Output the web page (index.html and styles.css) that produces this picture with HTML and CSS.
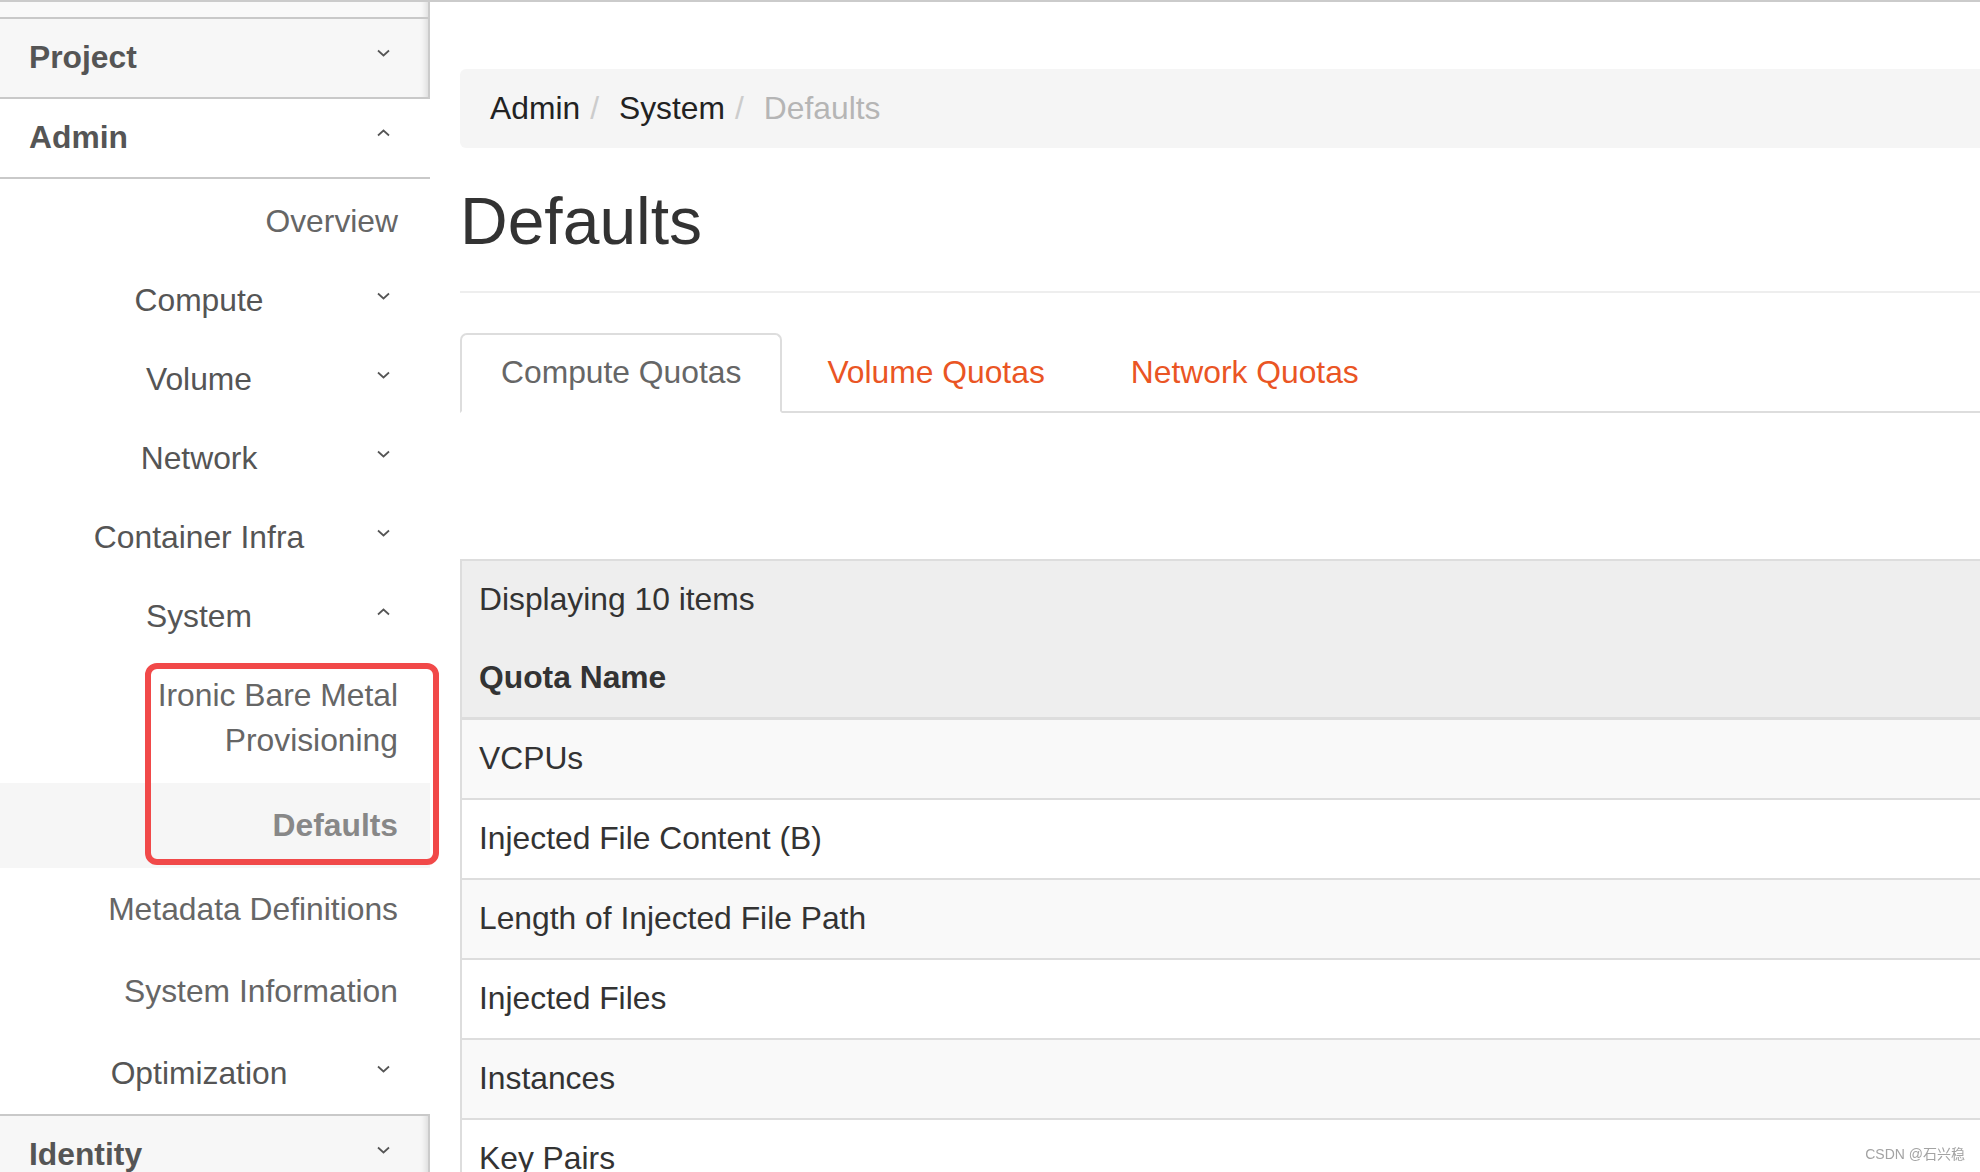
FILE: index.html
```html
<!DOCTYPE html>
<html lang="en">
<head>
	<meta charset="UTF-8">
	<title>Defaults - OpenStack Dashboard</title>
	<link rel="stylesheet" href="styles.css">
</head>
<body>
	<div class="page">
		<nav class="sidebar">
			<div class="panel_cut"></div>
			<div class="panel_head collapsed">
				<span>Project</span>
				<svg class="chev" viewBox="0 0 13 8"><path d="M1 1.5 6.5 6.5 12 1.5"/></svg>
			</div>
			<div class="panel_head">
				<span>Admin</span>
				<svg class="chev" viewBox="0 0 13 8"><path d="M1 6.5 6.5 1.5 12 6.5"/></svg>
			</div>
			<ul class="menu">
				<li class="item link">Overview</li>
				<li class="item group"><span>Compute</span><svg class="chev" viewBox="0 0 13 8"><path d="M1 1.5 6.5 6.5 12 1.5"/></svg></li>
				<li class="item group"><span>Volume</span><svg class="chev" viewBox="0 0 13 8"><path d="M1 1.5 6.5 6.5 12 1.5"/></svg></li>
				<li class="item group"><span>Network</span><svg class="chev" viewBox="0 0 13 8"><path d="M1 1.5 6.5 6.5 12 1.5"/></svg></li>
				<li class="item group"><span>Container Infra</span><svg class="chev" viewBox="0 0 13 8"><path d="M1 1.5 6.5 6.5 12 1.5"/></svg></li>
				<li class="item group"><span>System</span><svg class="chev" viewBox="0 0 13 8"><path d="M1 6.5 6.5 1.5 12 6.5"/></svg></li>
				<li class="item link sub">Ironic Bare Metal Provisioning</li>
				<li class="item link sub active">Defaults</li>
				<li class="item link after">Metadata Definitions</li>
				<li class="item link after">System Information</li>
				<li class="item group after"><span>Optimization</span><svg class="chev" viewBox="0 0 13 8"><path d="M1 1.5 6.5 6.5 12 1.5"/></svg></li>
			</ul>
			<div class="panel_head collapsed last">
				<span>Identity</span>
				<svg class="chev" viewBox="0 0 13 8"><path d="M1 1.5 6.5 6.5 12 1.5"/></svg>
			</div>
		</nav>

		<main class="content">
			<ol class="breadcrumb">
				<li>Admin</li>
				<li>System</li>
				<li class="current">Defaults</li>
			</ol>
			<h1 class="page_title">Defaults</h1>

			<ul class="tabs">
				<li class="active"><a>Compute Quotas</a></li>
				<li><a>Volume Quotas</a></li>
				<li><a>Network Quotas</a></li>
			</ul>

			<table class="quota_table">
				<thead>
					<tr><th class="caption">Displaying 10 items</th></tr>
					<tr><th class="col_name">Quota Name</th></tr>
				</thead>
				<tbody>
					<tr><td>VCPUs</td></tr>
					<tr><td>Injected File Content (B)</td></tr>
					<tr><td>Length of Injected File Path</td></tr>
					<tr><td>Injected Files</td></tr>
					<tr><td>Instances</td></tr>
					<tr><td>Key Pairs</td></tr>
					<tr><td>Metadata Items</td></tr>
					<tr><td>RAM (MB)</td></tr>
					<tr><td>Server Groups</td></tr>
					<tr><td>Server Group Members</td></tr>
				</tbody>
			</table>
		</main>

		<!-- 截图上的红框标注 -->
		<div class="mark"></div>
	</div>
	<div class="watermark">CSDN @石兴稳</div>
</body>
</html>
```

FILE: styles.css
```css
html,body{margin: 0;padding: 0;overflow: hidden;}
body{font-family: "Liberation Sans", Arial, sans-serif;font-size: 31.8px;color: #333;background: #fff;}
ul,ol,li,h1{margin: 0;padding: 0;}
li{list-style: none;}

.page{display: flex;align-items: flex-start;width: 2300px;border-top: 2px solid #cbcbcb;position: relative;}

/* sidebar */
.sidebar{width: 430px;flex: none;}
.panel_cut{height: 15px;background: #f9f9f9;border-right: 2px solid #cbcbcb;border-bottom: 2px solid #c9c9c9;box-shadow: inset -8px 0 6px -6px rgba(0,0,0,0.12);}
.panel_head{display: flex;justify-content: space-between;padding: 16px 40px 17px 29px;line-height: 45px;font-weight: bold;color: #555;border-bottom: 2px solid #c9c9c9;}
.panel_head.collapsed{background: #f7f7f7;border-right: 2px solid #cbcbcb;padding-right: 38px;box-shadow: inset -8px 0 6px -6px rgba(0,0,0,0.12);}
.panel_head.last{border-top: 2px solid #c9c9c9;border-bottom: 0;}
.chev{width: 13px;height: 8px;margin-top: 14px;flex: none;}
.chev path{fill: none;stroke: #555;stroke-width: 1.7;}

.menu{padding: 3px 0 0;}
.item{padding: 17px 32px 17px 0;line-height: 45px;color: #555;}
.item.link{text-align: right;color: #666;}
.item.group{display: grid;}
.item.group span,.item.group .chev{grid-area: 1 / 1;}
.item.group span{justify-self: center;}
.item.group .chev{justify-self: end;margin-right: 8px;}
.item.sub{padding-left: 150px;}
.item.active{margin-top: 3px;padding-top: 20px;padding-bottom: 20px;background: #f6f6f6;color: #888;font-weight: bold;}
.item.after{padding-top: 19px;padding-bottom: 18px;}

/* main */
.content{flex: 1;padding: 67px 0 0 30px;}
.breadcrumb{display: flex;height: 79px;line-height: 79px;padding: 0 30px;background: #f5f5f5;border-radius: 6px;color: #222;}
.breadcrumb li + li:before{content: "/";color: #ccc;padding: 0 20px 0 10px;}
.breadcrumb .current{color: #b5b5b5;}

.page_title{margin-top: 38px;padding-bottom: 34px;border-bottom: 2px solid #eee;font-size: 66px;line-height: 1.08;font-weight: normal;color: #333;}

.tabs{display: flex;margin-top: 40px;border-bottom: 2px solid #ddd;}
.tabs li{margin: 0 4px -2px 0;}
.tabs a{display: block;padding: 15px 39px 16px;line-height: 45px;border: 2px solid transparent;border-radius: 7px 7px 0 0;color: #ea5524;}
.tabs .active a{border-color: #ddd #ddd transparent;background: #fff;color: #666;}

.quota_table{margin-top: 146px;width: 100%;border-collapse: collapse;border: 2px solid #ddd;}
.quota_table th,.quota_table td{padding: 16px 17px 17px;line-height: 45px;text-align: left;}
.quota_table thead{background: #eee;}
.quota_table .caption{font-weight: normal;}
.quota_table .col_name{font-weight: bold;border-bottom: 3px solid #ddd;}
.quota_table td{border-bottom: 2px solid #ddd;}
.quota_table tbody tr:nth-child(odd){background: #f9f9f9;}

.mark{position: absolute;left: 145px;top: 661px;width: 282px;height: 190px;border: 6px solid #f14949;border-radius: 12px;}
.watermark{position: fixed;right: 15px;bottom: 9px;font-family: "Liberation Sans", "Noto Sans CJK SC", sans-serif;font-size: 14px;color: #a3a3a3;}
```
